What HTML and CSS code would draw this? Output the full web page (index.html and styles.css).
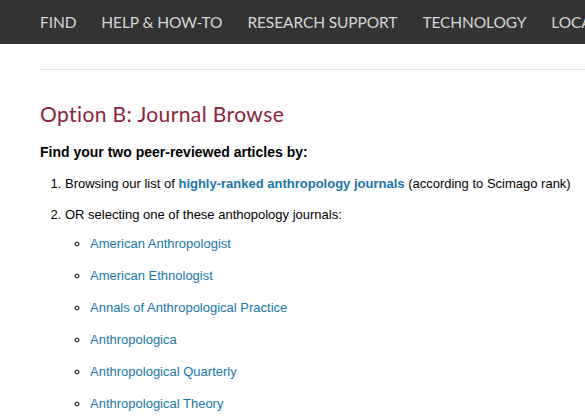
FILE: index.html
```html
<!DOCTYPE html>
<html>
<head>
<meta charset="utf-8">
<link rel="stylesheet" href="styles.css">
</head>
<body>
<nav class="topnav">
  <a href="#">FIND</a>
  <a href="#">HELP &amp; HOW-TO</a>
  <a href="#">RESEARCH SUPPORT</a>
  <a href="#">TECHNOLOGY</a>
  <a href="#">LOCATIONS</a>
</nav>
<main class="content">
  <hr class="rule">
  <h2 class="title">Option B: Journal Browse</h2>
  <p class="lead">Find your two peer-reviewed articles by:</p>
  <ol class="steps">
    <li>Browsing our list of <a class="strong-link" href="#">highly-ranked anthropology journals</a> (according to Scimago rank)</li>
    <li>OR selecting one of these anthopology journals:
      <ul class="journals">
        <li><a href="#">American Anthropologist</a></li>
        <li><a href="#">American Ethnologist</a></li>
        <li><a href="#">Annals of Anthropological Practice</a></li>
        <li><a href="#">Anthropologica</a></li>
        <li><a href="#">Anthropological Quarterly</a></li>
        <li><a href="#">Anthropological Theory</a></li>
      </ul>
    </li>
  </ol>
</main>
</body>
</html>
```

FILE: styles.css
```css
html, body {
  margin: 0;
  padding: 0;
  background: #fff;
  overflow: hidden;
}
body {
  font-family: "Liberation Sans", Arial, sans-serif;
  font-size: 13px;
  color: #000;
}
.topnav {
  background: #333333;
  height: 44px;
  display: flex;
  align-items: center;
  gap: 25px;
  padding-left: 40px;
  white-space: nowrap;
  overflow: hidden;
}
.topnav a {
  color: #d6d6d6;
  text-decoration: none;
  font-family: "Lato", "Open Sans", sans-serif;
  font-size: 15.5px;
  letter-spacing: -0.1px;
}
.content {
  padding-left: 40px;
}
.rule {
  margin: 25px 0 0 0;
  border: 0;
  border-top: 1px solid #e3e3e3;
}
.title {
  font-family: "Lato", "Open Sans", sans-serif;
  font-weight: normal;
  color: #8a2240;
  font-size: 21px;
  margin: 31px 0 0 0;
  letter-spacing: 0.4px;
}
.lead {
  font-weight: bold;
  font-size: 14px;
  margin: 18px 0 0 0;
}
.steps {
  margin: 15px 0 0 0;
  padding-left: 25px;
}
.steps > li {
  margin-bottom: 14px;
  line-height: 17px;
}
a {
  color: #1a75aa;
  text-decoration: none;
}
.strong-link {
  font-weight: bold;
}
.journals {
  list-style-type: circle;
  margin: 12px 0 0 0;
  padding-left: 25px;
}
.journals li {
  margin-bottom: 15px;
  line-height: 17px;
}
```
